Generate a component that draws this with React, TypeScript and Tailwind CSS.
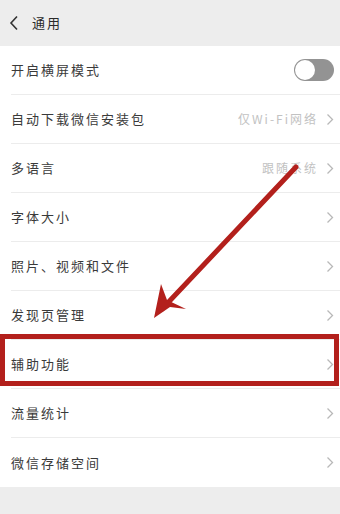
import React from 'react';

const font = { fontFamily: '"Noto Sans CJK SC", "Noto Sans", sans-serif' };

type Row = { label: string; value?: string; toggle?: boolean };

const rows: Row[] = [
  { label: '开启横屏模式', toggle: true },
  { label: '自动下载微信安装包', value: '仅Wi-Fi网络' },
  { label: '多语言', value: '跟随系统' },
  { label: '字体大小' },
  { label: '照片、视频和文件' },
  { label: '发现页管理' },
  { label: '辅助功能' },
  { label: '流量统计' },
  { label: '微信存储空间' },
];

function Chevron() {
  return (
    <svg width="8" height="13" viewBox="0 0 8 13" className="shrink-0">
      <polyline points="1.5,1.5 6.5,6.5 1.5,11.5" fill="none" stroke="#b8b8b8" strokeWidth="1.3" />
    </svg>
  );
}

function Toggle() {
  return (
    <div className="w-[40px] h-[22px] rounded-full bg-[#939393] flex items-center p-[1px]">
      <div className="w-[20px] h-[20px] rounded-full bg-white" />
    </div>
  );
}

export default function App() {
  return (
    <div className="relative w-[340px] h-[514px] bg-[#ededed] overflow-hidden" style={font}>
      <header className="h-[46px] flex items-center gap-[13px] px-[9px]">
        <svg width="10" height="16" viewBox="0 0 10 16">
          <polyline points="8,1.5 2,8 8,14.5" fill="none" stroke="#333" strokeWidth="1.6" />
        </svg>
        <span className="text-[13px] text-[#2a2a2a] tracking-[2px]">通用</span>
      </header>

      <div className="bg-white">
        {rows.map((r, i) => (
          <div key={r.label} className="pl-[11px]">
            <div
              className={`h-[49px] flex items-center pr-[6px] ${
                i < rows.length - 1 ? 'border-b border-[#ececec]' : ''
              }`}
            >
              <span className="flex-1 text-[13px] text-[#3a3a3a] tracking-[2px]">{r.label}</span>
              {r.value && (
                <span className="text-[12px] text-[#c2c2c2] mr-[8px] tracking-[2px]">{r.value}</span>
              )}
              {r.toggle ? <Toggle /> : <Chevron />}
            </div>
          </div>
        ))}
      </div>

      {/* 标注框 */}
      <div className="absolute left-0 top-[334px] w-[339px] h-[52px] border-[5px] border-[#b3201c]" />

      {/* 箭头 */}
      <svg className="absolute left-0 top-0" width="340" height="514" viewBox="0 0 340 514">
        <line x1="296" y1="167" x2="162" y2="309" stroke="#b3201c" strokeWidth="5" strokeLinecap="round" />
        <polygon points="154,318 161,284 167,300 186,309 170,307" fill="#b3201c" />
      </svg>
    </div>
  );
}
